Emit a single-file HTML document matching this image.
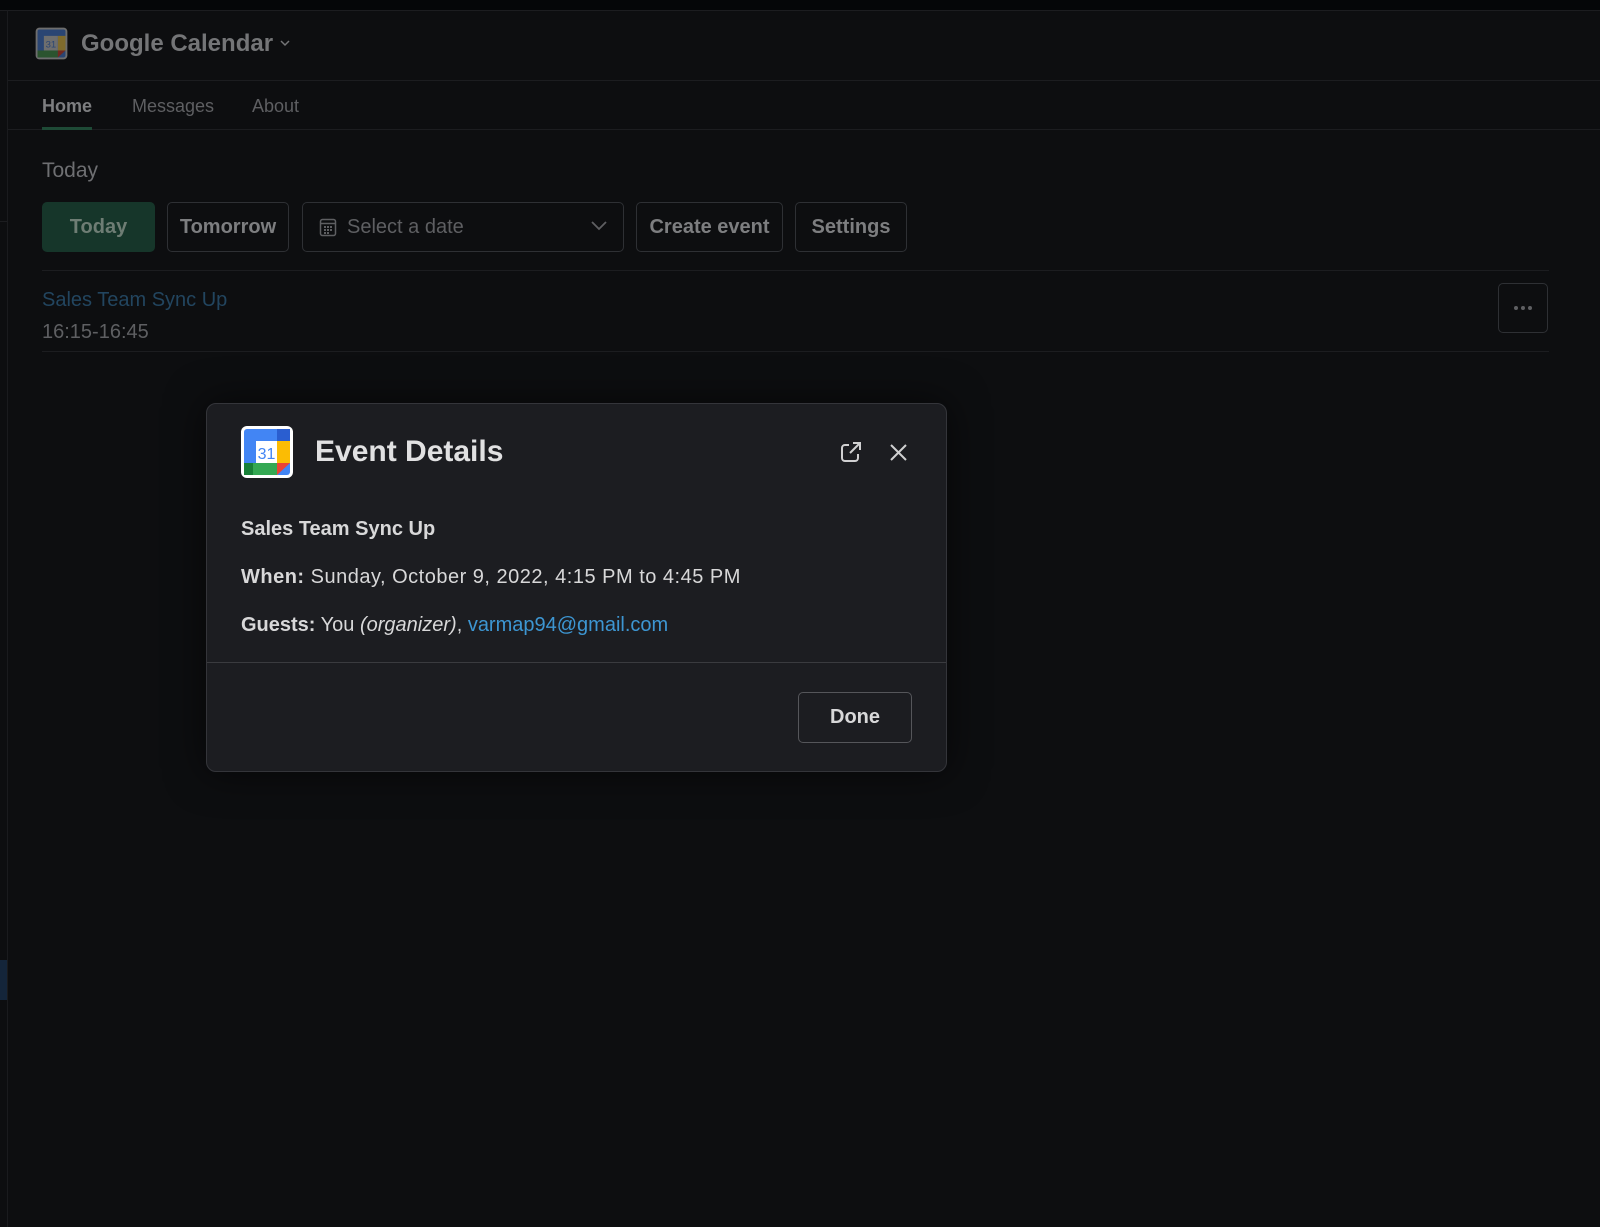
<!DOCTYPE html>
<html><head><meta charset="utf-8"><style>
*{margin:0;padding:0;box-sizing:border-box}
body{width:1600px;height:1227px;background:#0d0e10;font-family:"Liberation Sans",sans-serif;position:relative;overflow:hidden;color:#ccc}
.a{position:absolute}
svg{display:block}
.btn{position:absolute;top:202px;height:50px;border:1px solid #2e3034;border-radius:5px;color:#7d7e80;font-weight:bold;font-size:20px;display:flex;align-items:center;justify-content:center}
</style></head><body>
<div class="a" style="left:0;top:0;width:1600px;height:10px;background:#050608"></div>
<div class="a" style="left:0;top:10px;width:1600px;height:1px;background:#1c1d20"></div>
<div class="a" style="left:7px;top:10px;width:1px;height:1217px;background:#1a1b1e"></div>
<div class="a" style="left:0;top:221px;width:7px;height:1px;background:#1c1d20"></div>
<div class="a" style="left:0;top:960px;width:7px;height:40px;background:#14253a"></div>
<div class="a" style="left:8px;top:80px;width:1592px;height:1px;background:#1c1d20"></div>
<div class="a" style="left:8px;top:129px;width:1592px;height:1px;background:#1c1d20"></div>

<svg class="a" style="left:35px;top:27px" width="33" height="33" viewBox="0 0 52 52">
<rect x="1" y="1" width="50" height="50" rx="6" fill="#6e6e6e"/>
<rect x="4" y="4" width="44" height="44" rx="3" fill="#2a4573"/>
<rect x="36" y="14" width="12" height="23" fill="#7f6b2d"/>
<rect x="4" y="37" width="32" height="11" fill="#2b542f"/>
<polygon points="36,37 48,37 36,48" fill="#72281f"/>
<rect x="14" y="14" width="22" height="23" fill="#6e6e6e"/>
<text x="25" y="32" font-size="15" text-anchor="middle" fill="#2a4573" font-family="Liberation Sans">31</text>
</svg>
<div class="a" style="left:81px;top:30px;font-size:24px;font-weight:bold;color:#747577">Google Calendar</div>
<svg class="a" style="left:279px;top:38px" width="12" height="10"><path d="M2 3l4 4 4-4" stroke="#747577" stroke-width="1.5" fill="none"/></svg>

<div class="a" style="left:42px;top:96px;font-size:18px;font-weight:bold;color:#7d7e80">Home</div>
<div class="a" style="left:42px;top:127px;width:50px;height:3px;background:#1e4a36"></div>
<div class="a" style="left:132px;top:96px;font-size:18px;color:#5e5f62">Messages</div>
<div class="a" style="left:252px;top:96px;font-size:18px;color:#5e5f62">About</div>

<div class="a" style="left:42px;top:159px;font-size:21px;color:#6e6f72">Today</div>
<div class="btn" style="left:42px;width:113px;background:#16362a;border-color:#16362a;color:#6e7d74">Today</div>
<div class="btn" style="left:167px;width:122px">Tomorrow</div>
<div class="btn" style="left:302px;width:322px;justify-content:flex-start;padding-left:16px;font-weight:normal;color:#5e5f62">
<svg width="18" height="20" viewBox="0 0 18 20" style="margin-right:10px"><rect x="1.5" y="2.5" width="15" height="16" rx="2" stroke="#5e5f62" fill="none" stroke-width="1.5"/><line x1="1.5" y1="6.5" x2="16.5" y2="6.5" stroke="#5e5f62" stroke-width="1.5"/><g fill="#5e5f62"><rect x="5" y="9" width="2" height="2"/><rect x="8" y="9" width="2" height="2"/><rect x="11" y="9" width="2" height="2"/><rect x="5" y="12" width="2" height="2"/><rect x="8" y="12" width="2" height="2"/><rect x="11" y="12" width="2" height="2"/><rect x="5" y="15" width="2" height="2"/><rect x="8" y="15" width="2" height="2"/></g></svg>Select a date
<svg class="a" style="left:288px;top:17px" width="16" height="12"><path d="M1 2l7 7 7-7" stroke="#5e5f62" stroke-width="1.8" fill="none"/></svg></div>
<div class="btn" style="left:636px;width:147px">Create event</div>
<div class="btn" style="left:795px;width:112px">Settings</div>

<div class="a" style="left:42px;top:270px;width:1507px;height:1px;background:#1c1d20"></div>
<div class="a" style="left:42px;top:289px;font-size:20px;color:#22455f">Sales Team Sync Up</div>
<div class="a" style="left:42px;top:321px;font-size:20px;color:#5e5f62">16:15-16:45</div>
<div class="a" style="left:42px;top:351px;width:1507px;height:1px;background:#1c1d20"></div>
<div class="a" style="left:1498px;top:283px;width:50px;height:50px;border:1px solid #2e3034;border-radius:5px;display:flex;align-items:center;justify-content:center">
<svg width="18" height="4"><circle cx="2" cy="2" r="2" fill="#5e5f62"/><circle cx="9" cy="2" r="2" fill="#5e5f62"/><circle cx="16" cy="2" r="2" fill="#5e5f62"/></svg></div>

<div class="a" style="left:206px;top:403px;width:741px;height:369px;background:#1c1d21;border:1px solid #34353a;border-radius:10px;box-shadow:0 0 40px rgba(0,0,0,.6)"></div>
<svg class="a" style="left:241px;top:426px" width="52" height="52" viewBox="0 0 52 52">
<rect x="0" y="0" width="52" height="52" rx="6" fill="#fff"/>
<rect x="3" y="3" width="46" height="46" rx="3" fill="#4285f4"/>
<rect x="36" y="3" width="13" height="12" fill="#2a5ed0"/>
<rect x="36" y="15" width="13" height="22" fill="#fbbc04"/>
<rect x="3" y="37" width="33" height="12" fill="#34a853"/>
<rect x="3" y="37" width="9" height="12" fill="#188038"/>
<polygon points="36,37 49,37 36,49" fill="#ea4335"/>
<rect x="15" y="15" width="21" height="22" fill="#fff"/>
<text x="25.5" y="33" font-size="16" text-anchor="middle" fill="#4285f4" font-family="Liberation Sans">31</text>
</svg>
<div class="a" style="left:315px;top:435px;font-size:30px;font-weight:bold;color:#e1e1e2">Event Details</div>
<svg class="a" style="left:840px;top:441px" width="23" height="22" viewBox="0 0 23 22"><path d="M9 4H5a3 3 0 0 0-3 3v10a3 3 0 0 0 3 3h10a3 3 0 0 0 3-3v-4" stroke="#d0d0d1" stroke-width="2" fill="none"/><path d="M10 12L20 2M13 2h7v7" stroke="#d0d0d1" stroke-width="2" fill="none"/></svg>
<svg class="a" style="left:890px;top:444px" width="17" height="17"><path d="M1 1l15 15M16 1L1 16" stroke="#d0d0d1" stroke-width="2"/></svg>

<div class="a" style="left:241px;top:518px;font-size:20px;font-weight:bold;color:#d8d8d9">Sales Team Sync Up</div>
<div class="a" style="left:241px;top:566px;font-size:20px;color:#d8d8d9;letter-spacing:0.5px"><b>When:</b> Sunday, October 9, 2022, 4:15 PM to 4:45 PM</div>
<div class="a" style="left:241px;top:614px;font-size:20px;color:#d8d8d9"><b>Guests:</b> You <i>(organizer)</i>, <span style="color:#3d96d2">varmap94@gmail.com</span></div>
<div class="a" style="left:207px;top:662px;width:739px;height:1px;background:#3a3b3f"></div>
<div class="a" style="left:798px;top:692px;width:114px;height:51px;border:1px solid #55565a;border-radius:5px;display:flex;align-items:center;justify-content:center;font-size:20px;font-weight:bold;color:#d8d8d9">Done</div>
</body></html>
